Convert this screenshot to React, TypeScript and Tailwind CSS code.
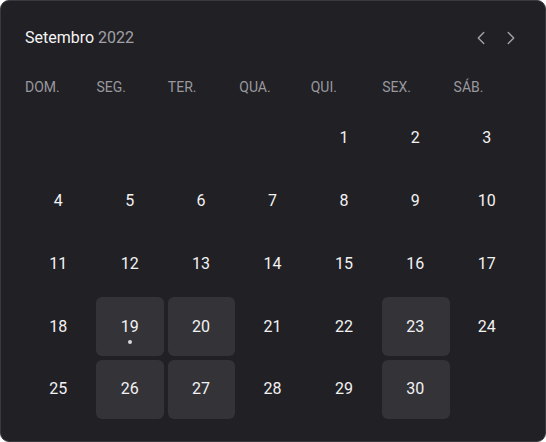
import { ChevronLeft, ChevronRight } from "lucide-react";

const WEEKDAYS = ["DOM.", "SEG.", "TER.", "QUA.", "QUI.", "SEX.", "SÁB."];

const HIGHLIGHTED = [19, 20, 23, 26, 27, 30];

// setembro 2022 começa numa quinta-feira
const LEADING = 4;
const DAYS = 30;

export default function App() {
  const cells: (number | null)[] = [];
  for (let i = 0; i < LEADING; i++) cells.push(null);
  for (let d = 1; d <= DAYS; d++) cells.push(d);

  return (
    <div
      className="w-[546px] h-[442px] bg-white"
      style={{ fontFamily: "Roboto, 'Noto Sans', sans-serif" }}
    >
      <div className="h-full rounded-[9px] border border-[#3a393e] bg-[#212024] pl-6 pr-[24px] pt-[24px]">
        <div className="flex items-center justify-between h-[26px]">
          <h2 className="text-[16px] leading-none">
            <span className="text-[#f4f4f5]">Setembro</span>{" "}
            <span className="text-[#a1a1a8]">2022</span>
          </h2>
          <div className="flex items-center gap-[8px] mr-[-1px] text-[#a3a3aa]">
            <button className="flex items-center justify-center w-[22px] h-[22px]">
              <ChevronLeft size={22} strokeWidth={1.5} />
            </button>
            <button className="flex items-center justify-center w-[22px] h-[22px]">
              <ChevronRight size={22} strokeWidth={1.5} />
            </button>
          </div>
        </div>

        <div className="grid grid-cols-7 gap-x-1 mt-[27px] mb-[13px]">
          {WEEKDAYS.map((w) => (
            <div
              key={w}
              className="text-[14px] leading-[18px] text-[#98989f]"
            >
              {w}
            </div>
          ))}
        </div>

        <div className="grid grid-cols-7 gap-x-1 gap-y-[4.25px]">
          {cells.map((d, i) => (
            <div
              key={i}
              className={
                "relative h-[58.5px] flex items-center justify-center rounded-[6px] " +
                (d && HIGHLIGHTED.includes(d) ? "bg-[#343338]" : "")
              }
            >
              {d && (
                <span className="text-[16px] text-[#f2f2f3] mr-[1px]">{d}</span>
              )}
              {d === 19 && (
                <span className="absolute left-1/2 top-[43px] -translate-x-1/2 w-[4px] h-[4px] rounded-full bg-[#d8d8dc]" />
              )}
            </div>
          ))}
        </div>
      </div>
    </div>
  );
}
